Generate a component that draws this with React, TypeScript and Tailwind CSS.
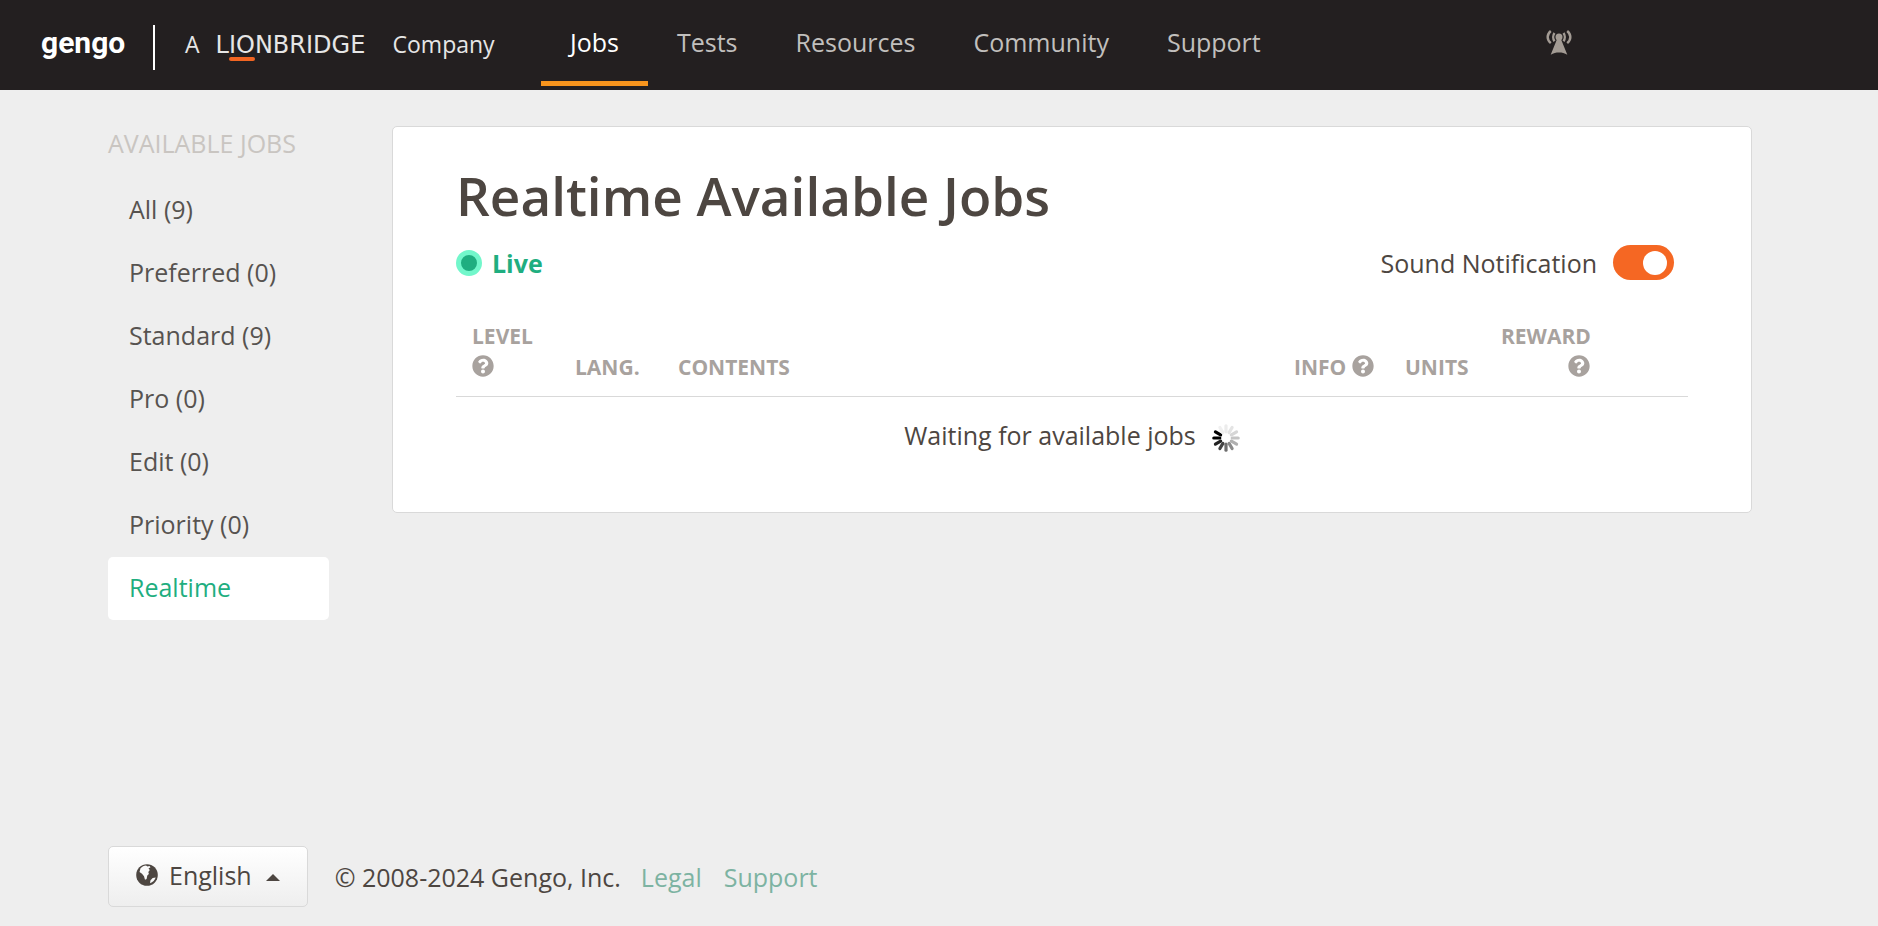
import React, { useState } from 'react';
import { FaQuestionCircle } from 'react-icons/fa';

const navItems = ['Jobs', 'Tests', 'Resources', 'Community', 'Support'];

const filters = [
  { name: 'All', count: 9 },
  { name: 'Preferred', count: 0 },
  { name: 'Standard', count: 9 },
  { name: 'Pro', count: 0 },
  { name: 'Edit', count: 0 },
  { name: 'Priority', count: 0 },
  { name: 'Realtime' },
];

const spokes = ['#ececec', '#e4e4e4', '#d6d6d6', '#c4c4c4', '#b0b0b0', '#8a8a8a', '#6e6e6e', '#444444', '#222222', '#000000', '#000000', '#f0f0f0'];

const AntennaIcon = () => (
  <svg width="26" height="26" viewBox="0 0 26 26" fill="none" stroke="#a39b94" strokeWidth="2.4" aria-hidden="true">
    <circle cx="13" cy="7" r="3.5" fill="#a39b94" stroke="none" />
    <path d="M11.500 8h3l6.800 16.800c-2.700-1.800-5.300-2.300-8.300-2.300s-5.600.5-8.300 2.300z" fill="#a39b94" stroke="none" />
    <path d="M8.500 3C6.800 5.200 6.800 8.800 8.500 11.200M17.500 3c1.700 2.200 1.700 5.800 0 8.200" />
    <path d="M4.800 1C.6 4.500.6 9.700 4.800 13.200M21.200 1c4.200 3.500 4.200 8.700 0 12.200" />
  </svg>
);

const GlobeIcon = () => (
  <svg width="22" height="22" viewBox="0 0 22 22" aria-hidden="true">
    <circle cx="11" cy="11" r="10.800" fill="#4d4641" />
    <path d="M4.500 4.200C6 2.600 8 1.800 10 1.500l1.500 1 2-.6 1 1.300-2 1.300 1.300 1.500-1.500 2 .6 2-1.600 1.500-.7 3.500-1.600.7-1-3.400-2-2.600L3.500 8z" fill="#fafafa" />
    <path d="M14 19.200l.5-3 2.200-2.200 3-.5c-.7 2.500-3 4.800-5.700 5.700z" fill="#fafafa" />
  </svg>
);

const Spinner = () => (
  <svg width="28" height="28" viewBox="0 0 28 28" role="img" aria-label="Loading" className="self-end">
    {spokes.map((color, i) => (
      <line key={i} x1="14" y1="1.800" x2="14" y2="7.800" stroke={color} strokeWidth="3.200" strokeLinecap="round" transform={`rotate(${i * 30} 14 14)`} />
    ))}
  </svg>
);

const Help = ({ label }: { label: string }) => (
  <button type="button" aria-label={label} className="inline-block align-top pt-[3px]">
    <FaQuestionCircle size={22} />
  </button>
);

const Header = () => (
  <header className="flex h-[90px] bg-[#231f20]">
    <a href="#" className="flex w-[541px] shrink-0 items-center whitespace-nowrap pl-[41px]">
      <span className="mb-1 w-[84px] font-[Roboto,sans-serif] text-[30px] font-bold text-white">gengo</span>
      <span className="mt-1 ml-7 h-[45px] w-[2px] bg-white" />
      <span className="mb-0.5 ml-[30px] text-[23px] text-[#e6e6e6]">A</span>
      <span className="ml-4 w-[164px] font-['DejaVu_Sans',sans-serif] text-[24px] text-[#e6e6e6]">
        L
        <span className="relative">
          IO
          <span className="absolute inset-x-0 -bottom-0.5 h-1 rounded-full bg-[#f26522]" />
        </span>
        NBRIDGE
      </span>
      <span className="mb-0.5 ml-[13px] text-[23px] text-[#e6e6e6]">Company</span>
    </a>
    <nav className="flex">
      {navItems.map((item, i) => (
        <a
          key={item}
          href="#"
          className={`flex h-[86px] items-center border-b-[5px] px-[29px] pt-0.5 ${
            i === 0 ? 'border-[#f7941d] text-white' : 'border-transparent text-[#c1bfbd]'
          }`}
        >
          {item}
        </a>
      ))}
    </nav>
    <button type="button" aria-label="Realtime feed" className="mr-[306px] mb-1 ml-auto self-center">
      <AntennaIcon />
    </button>
  </header>
);

const Sidebar = () => (
  <aside className="w-[221px] shrink-0">
    <h2 className="text-[#c9c5c1] leading-[34px] whitespace-nowrap">AVAILABLE JOBS</h2>
    <ul className="mt-[19px]">
      {filters.map(({ name, count }) => (
        <li key={name}>
          <a
            href="#"
            className={`block rounded-[5px] px-[21px] pb-[3px] leading-[60px] ${
              name === 'Realtime' ? 'bg-white text-[#1fae80]' : 'text-[#575350]'
            }`}
          >
            {name}
            {count !== undefined && ` (${count})`}
          </a>
        </li>
      ))}
    </ul>
  </aside>
);

const JobsPanel = () => {
  const [sound, setSound] = useState(true);

  return (
    <main className="min-w-0 flex-1 rounded-[5px] border border-[#d9d9d9] bg-white px-[63px] pt-[33px] pb-[60px]">
      <h1 className="text-[53px] leading-[72px] font-semibold text-[#4d4641]">Realtime Available Jobs</h1>
      <div className="mt-[13px] flex items-center justify-between pr-[14px]">
        <div className="flex items-center gap-[10px] font-bold text-[#1fae80]">
          <span className="h-[26px] w-[26px] rounded-full border-[5px] border-[#72f7cb] bg-[#1fae80]" />
          Live
        </div>
        <label className="flex items-center gap-4">
          Sound Notification
          <input
            type="checkbox"
            checked={sound}
            onChange={() => setSound(!sound)}
            className="h-[35px] w-[61px] appearance-none rounded-full bg-[#c9c5c1] p-[6px] before:block before:size-6 before:rounded-full before:bg-white checked:bg-[#f56723] checked:before:ml-6"
          />
        </label>
      </div>
      <table className="mt-[41px] w-full table-fixed">
        <thead>
          <tr className="border-b border-[#d9d9d9] text-left align-bottom text-[21px] leading-[31px] text-[#a8a29e] [&>th]:px-4 [&>th]:pb-[13px]">
            <th className="w-[103px]">LEVEL<br /><Help label="About level" /></th>
            <th className="w-[103px]">LANG.</th>
            <th>CONTENTS</th>
            <th className="w-[111px] whitespace-nowrap">INFO <Help label="About info" /></th>
            <th className="w-[96px]">UNITS</th>
            <th className="w-[121px] text-right">REWARD<br /><Help label="About reward" /></th>
            <th className="w-[82px]"></th>
          </tr>
        </thead>
        <tbody>
          <tr>
            <td colSpan={7} className="pt-[21px]">
              <div className="flex items-center justify-center gap-4">
                Waiting for available jobs
                <Spinner />
              </div>
            </td>
          </tr>
        </tbody>
      </table>
    </main>
  );
};

const Footer = () => (
  <footer className="mt-auto flex items-center pt-10 pr-[126px] pb-[19px] pl-[108px]">
    <button type="button" className="flex h-[61px] items-center rounded-[5px] border border-[#d9d9d9] bg-linear-to-b from-white to-[#eeeeee] px-[27px] pb-1">
      <GlobeIcon />
      <span className="ml-[11px]">English</span>
      <svg width="14" height="7" viewBox="0 0 14 7" className="mt-1.5 ml-[14px]" aria-hidden="true">
        <path d="M7 0l7 7H0z" fill="#4d4641" />
      </svg>
    </button>
    <p className="ml-[27px]">© 2008-2024 Gengo, Inc.</p>
    <a href="#" className="ml-5 text-[#7db3a2]">Legal</a>
    <a href="#" className="ml-[22px] text-[#7db3a2]">Support</a>
  </footer>
);

const App: React.FC = () => {
  return (
    <div className="flex min-h-screen flex-col bg-[#eeeeee] font-['Open_Sans',sans-serif] text-[25px] leading-[34px] text-[#4d4641]">
      <Header />
      <div className="flex items-start gap-[63px] pt-9 pr-[126px] pl-[108px]">
        <Sidebar />
        <JobsPanel />
      </div>
      <Footer />
    </div>
  );
};

export default App;
